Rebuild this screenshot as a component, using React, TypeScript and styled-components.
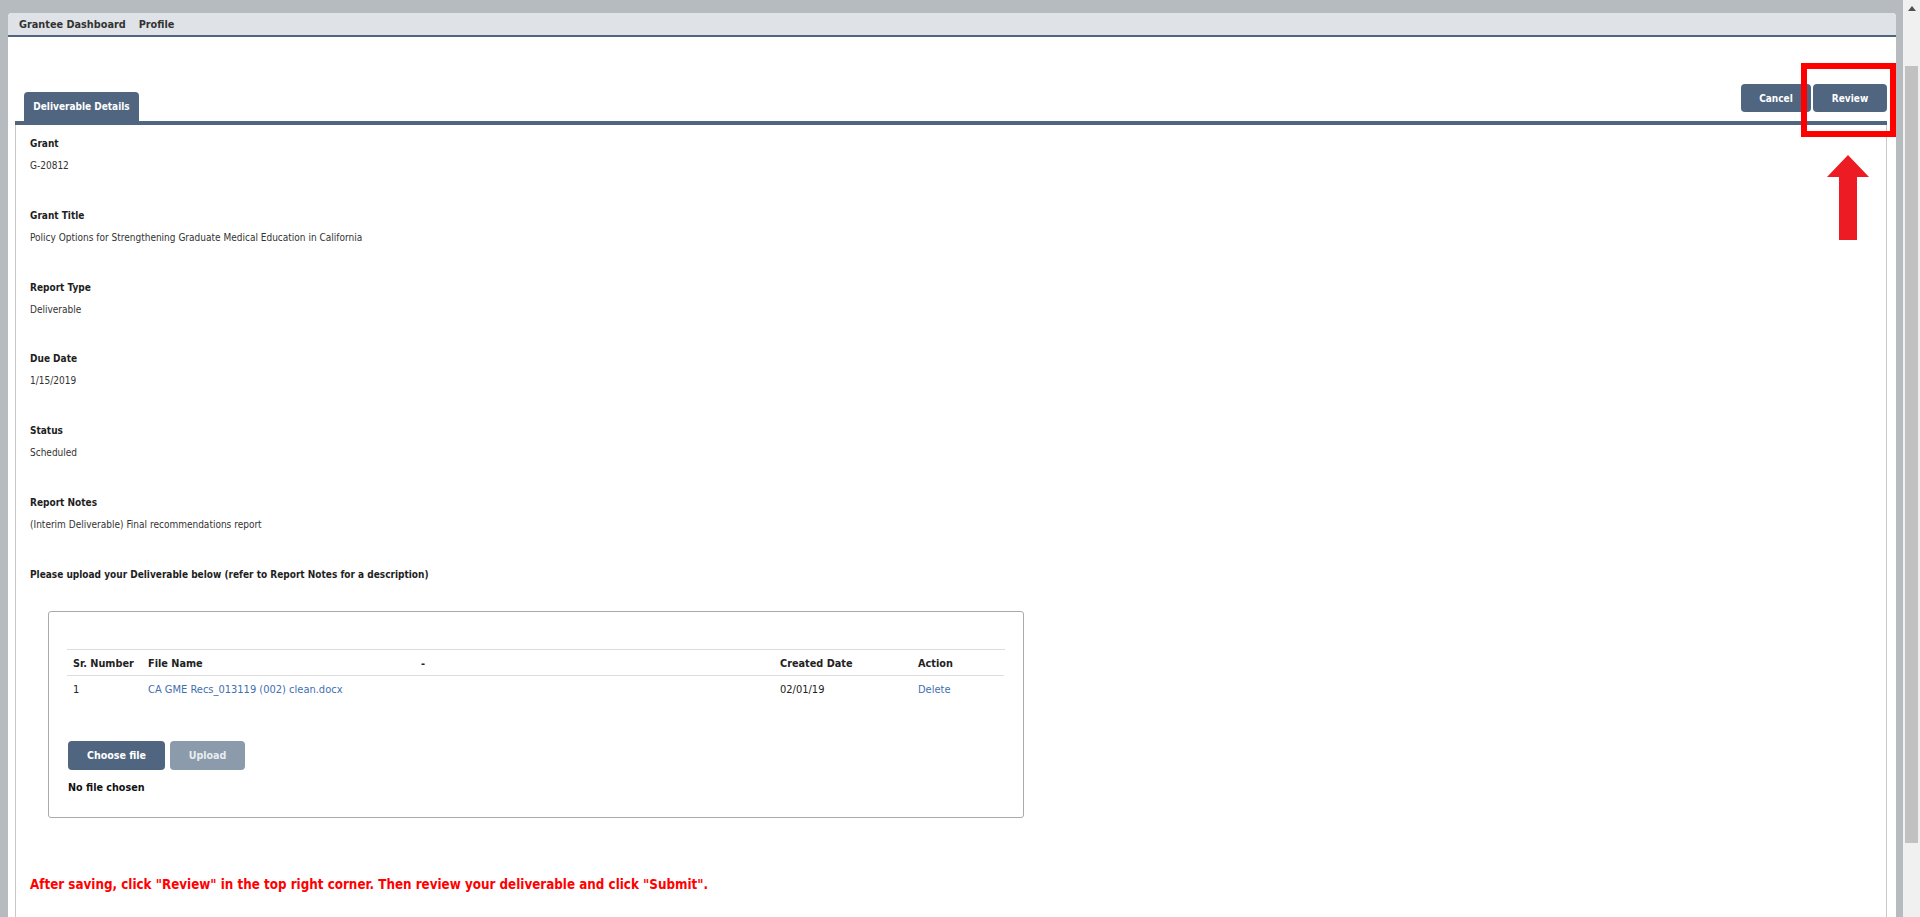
import styled, { createGlobalStyle } from "styled-components";

const GlobalStyle = createGlobalStyle`
  html, body {
    margin: 0;
    padding: 0;
    height: 100%;
    overflow: hidden;
  }
  body {
    font-family: "DejaVu Sans Condensed", "DejaVu Sans", sans-serif;
    color: #222;
    background: #b6bbc0;
  }
`;

const SLATE = "#4f6580";

const Screen = styled.div`
  position: relative;
  display: flex;
  height: 917px;
  overflow: hidden;
`;

const Main = styled.div`
  flex: 1;
  display: flex;
  flex-direction: column;
  padding: 13px 7px 0 8px;
  border-top: 4px solid #c2c6ca;
  margin-top: -4px;
  min-width: 0;
`;

const Panel = styled.div`
  flex: 1;
  display: flex;
  flex-direction: column;
  background: #fff;
  border-radius: 4px 4px 0 0;
  min-height: 0;
`;

const NavBar = styled.div`
  display: flex;
  align-items: center;
  gap: 13px;
  height: 22px;
  padding-left: 11px;
  background: #dfe3e7;
  border-bottom: 2px solid ${SLATE};
  border-radius: 4px 4px 0 0;
`;

const NavItem = styled.span`
  font-size: 10.8px;
  font-weight: bold;
  color: #333;
`;

const Body = styled.div`
  flex: 1;
  display: flex;
  flex-direction: column;
  padding: 47px 9px 0 7px;
  min-height: 0;
`;

const TabRow = styled.div`
  display: flex;
  justify-content: space-between;
  height: 37px;
  padding-left: 9px;
  border-bottom: 4px solid ${SLATE};
`;

const Tab = styled.div`
  align-self: flex-end;
  display: flex;
  align-items: center;
  justify-content: center;
  width: 115px;
  height: 29px;
  background: ${SLATE};
  border-radius: 4px 4px 0 0;
  color: #fff;
  font-size: 10px;
  font-weight: bold;
`;

const Actions = styled.div`
  display: flex;
  gap: 2px;
  align-self: flex-start;
`;

const Button = styled.button<{ $w: number; $h?: number; $size?: number; $disabled?: boolean }>`
  width: ${(p) => p.$w}px;
  height: ${(p) => p.$h ?? 28}px;
  padding: 0;
  border: none;
  border-radius: 4px;
  background: ${(p) => (p.$disabled ? "#8c9bac" : SLATE)};
  color: ${(p) => (p.$disabled ? "#e8ecf0" : "#fff")};
  font-family: inherit;
  font-size: ${(p) => p.$size ?? 10}px;
  font-weight: bold;
  cursor: ${(p) => (p.$disabled ? "default" : "pointer")};
`;

const Content = styled.div`
  flex: 1;
  padding: 8px 14px 0;
  border-left: 1px solid #c9c9c9;
  border-right: 1px solid #c9c9c9;
`;

const Field = styled.div`
  margin-bottom: 27.75px;
`;

const Label = styled.div`
  line-height: 22px;
  font-size: 10px;
  font-weight: bold;
  color: #1e1e1e;
`;

const Value = styled.div`
  line-height: 22px;
  font-size: 10px;
  color: #333;
`;

const UploadBox = styled.div`
  width: 938px;
  height: 168px;
  margin: 25px 0 0 18px;
  padding: 37px 18px 0 18px;
  border: 1px solid #aaa;
  border-radius: 3px;
`;

const Grid = styled.div`
  display: grid;
  grid-template-columns: 75px 273px 359px 138px 92px;
  border-top: 1px solid #ddd;
`;

const Cell = styled.div<{ $head?: boolean }>`
  height: ${(p) => (p.$head ? 25 : 26)}px;
  line-height: ${(p) => (p.$head ? 27 : 27)}px;
  padding-left: 6px;
  font-size: ${(p) => (p.$head ? 10.8 : 11)}px;
  font-weight: ${(p) => (p.$head ? "bold" : "normal")};
  color: #222;
  border-bottom: ${(p) => (p.$head ? "1px solid #ddd" : "none")};
  white-space: nowrap;
`;

const Link = styled.a`
  color: #3f6fb0;
  text-decoration: none;
`;

const UploadRow = styled.div`
  display: flex;
  gap: 5px;
  margin-top: 39px;
  padding-left: 1px;
`;

const NoFile = styled.div`
  margin-top: 11px;
  padding-left: 1px;
  font-size: 10.7px;
  font-weight: bold;
  color: #111;
`;

const Notice = styled.div`
  margin-top: 57px;
  line-height: 20px;
  font-size: 13.3px;
  font-weight: bold;
  color: #ff0000;
`;

const ScrollBar = styled.div`
  width: 17px;
  display: flex;
  flex-direction: column;
  align-items: center;
  background: #f0f0f0;
`;

const ScrollArrow = styled.div`
  height: 17px;
  display: flex;
  align-items: center;
  justify-content: center;
`;

const Thumb = styled.div`
  width: 13px;
  height: 777px;
  margin-top: 49px;
  background: #c1c1c1;
`;

const Highlight = styled.div`
  position: absolute;
  left: 1801px;
  top: 63px;
  width: 83px;
  height: 62px;
  border: 6px solid #ff0000;
`;

const Arrow = styled.svg`
  position: absolute;
  left: 1826px;
  top: 155px;
`;

const fields = [
  ["Grant", "G-20812"],
  ["Grant Title", "Policy Options for Strengthening Graduate Medical Education in California"],
  ["Report Type", "Deliverable"],
  ["Due Date", "1/15/2019"],
  ["Status", "Scheduled"],
  ["Report Notes", "(Interim Deliverable) Final recommendations report"],
];

export default function App() {
  return (
    <>
      <GlobalStyle />
      <Screen>
        <Main>
          <Panel>
            <NavBar>
              <NavItem>Grantee Dashboard</NavItem>
              <NavItem>Profile</NavItem>
            </NavBar>
            <Body>
              <TabRow>
                <Tab>Deliverable Details</Tab>
                <Actions>
                  <Button $w={70}>Cancel</Button>
                  <Button $w={74}>Review</Button>
                </Actions>
              </TabRow>
              <Content>
                {fields.map(([label, value]) => (
                  <Field key={label}>
                    <Label>{label}</Label>
                    <Value>{value}</Value>
                  </Field>
                ))}
                <Label>Please upload your Deliverable below (refer to Report Notes for a description)</Label>
                <UploadBox>
                  <Grid>
                    <Cell $head>Sr. Number</Cell>
                    <Cell $head>File Name</Cell>
                    <Cell $head>-</Cell>
                    <Cell $head>Created Date</Cell>
                    <Cell $head>Action</Cell>
                    <Cell>1</Cell>
                    <Cell>
                      <Link href="#">CA GME Recs_013119 (002) clean.docx</Link>
                    </Cell>
                    <Cell />
                    <Cell>02/01/19</Cell>
                    <Cell>
                      <Link href="#">Delete</Link>
                    </Cell>
                  </Grid>
                  <UploadRow>
                    <Button $w={97} $h={29} $size={10.6}>Choose file</Button>
                    <Button $w={75} $h={29} $size={10.6} $disabled>Upload</Button>
                  </UploadRow>
                  <NoFile>No file chosen</NoFile>
                </UploadBox>
                <Notice>
                  After saving, click "Review" in the top right corner. Then review your deliverable and click "Submit".
                </Notice>
              </Content>
            </Body>
          </Panel>
        </Main>
        <ScrollBar>
          <ScrollArrow>
            <svg width="8" height="5" viewBox="0 0 8 5">
              <path d="M0 5 L4 0 L8 5 Z" fill="#505050" />
            </svg>
          </ScrollArrow>
          <Thumb />
        </ScrollBar>
        <Highlight />
        <Arrow width="44" height="86" viewBox="0 0 44 86">
          <path d="M22 0 L43 22 L31 22 L31 85 L13 85 L13 22 L1 22 Z" fill="#ed1c24" />
        </Arrow>
      </Screen>
    </>
  );
}
